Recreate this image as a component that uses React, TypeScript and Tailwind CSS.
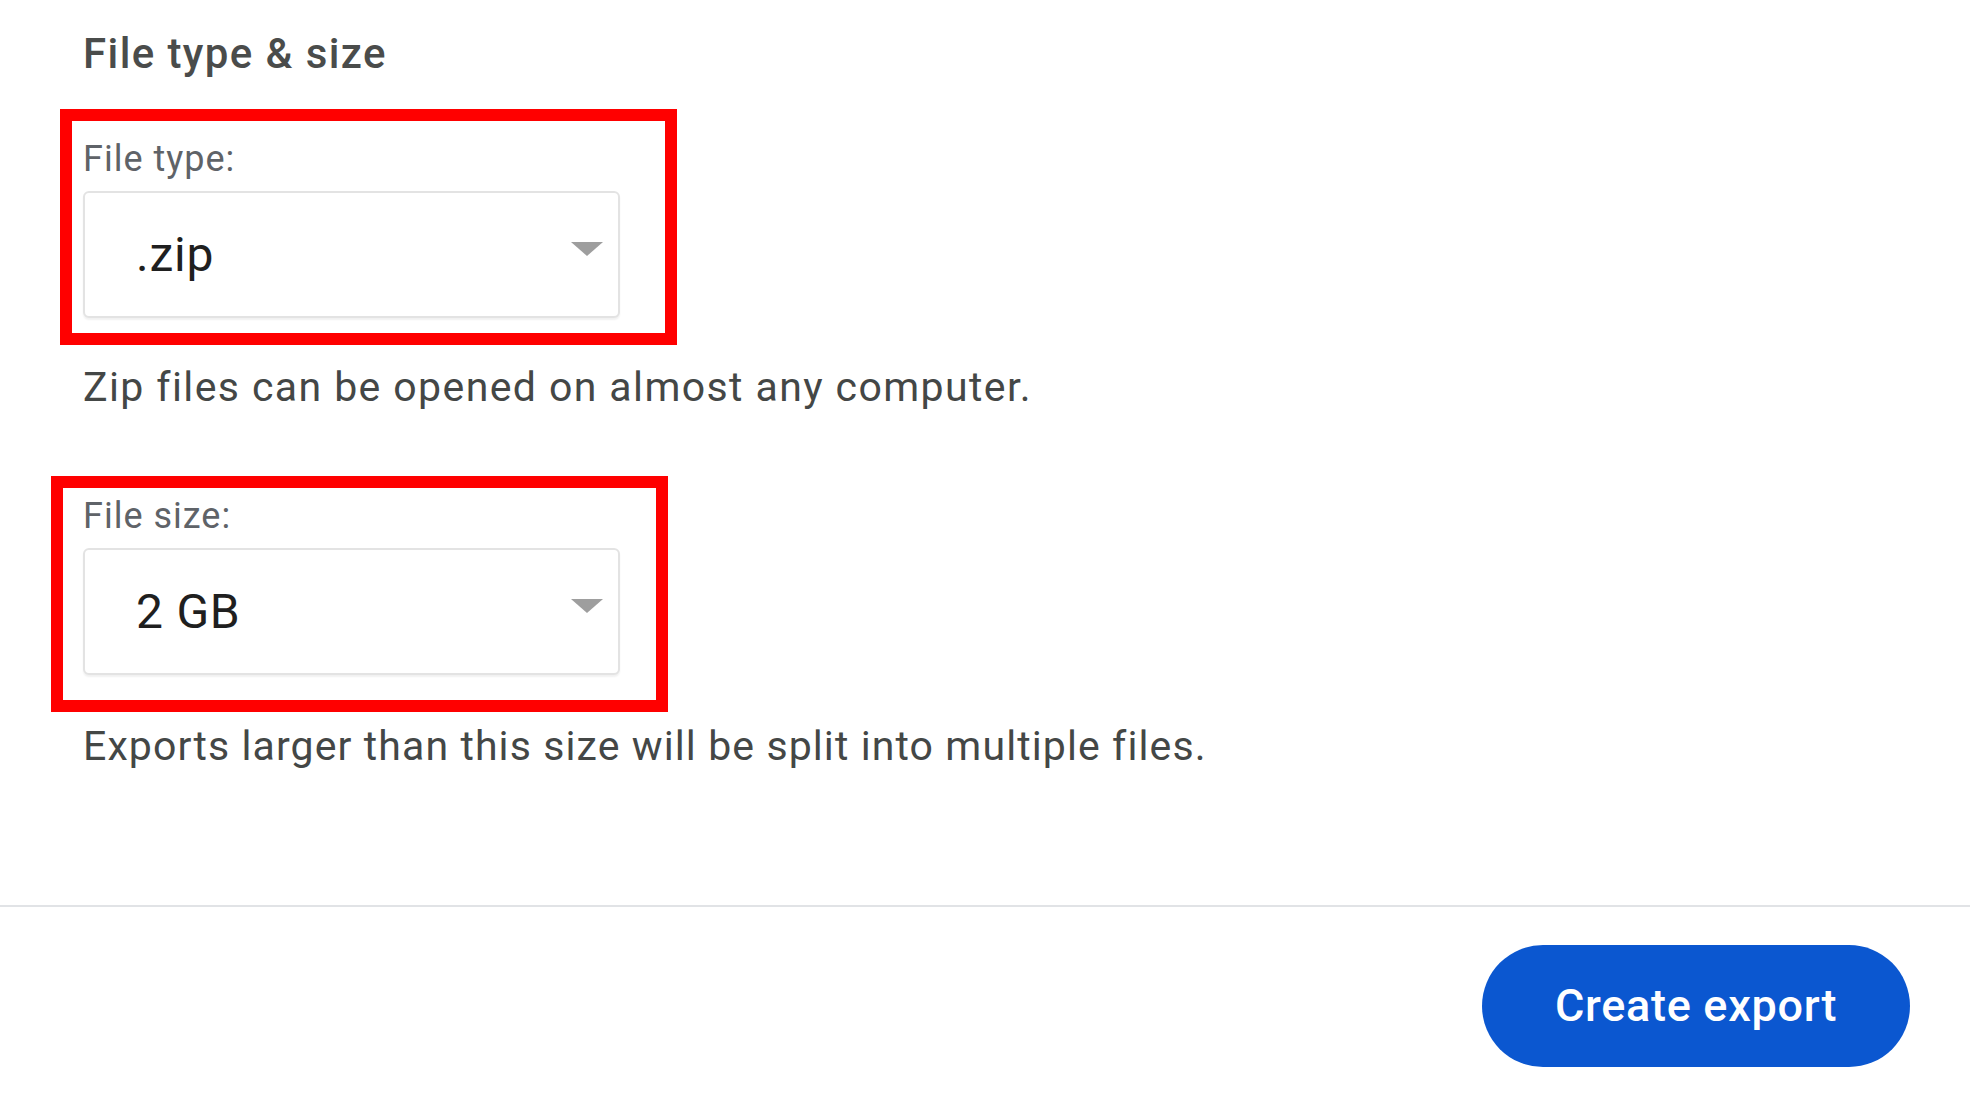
import React from 'react';

interface SelectFieldProps {
  label: string;
  value: string;
  boxClass: string;
}

const SelectField: React.FC<SelectFieldProps> = ({ label, value, boxClass }) => (
  <div className="relative w-[537px]">
    {/* annotation frame drawn over the field */}
    <div className={`absolute border-[12px] border-[#ff0000] pointer-events-none ${boxClass}`} />
    <div className="h-[40px] leading-[40px] text-[36px] tracking-[1px] text-[#5f6368]">{label}</div>
    <div className="mt-[12px] h-[127px] rounded-[6px] border-2 border-[#e3e3e3] bg-white shadow-[0_2px_2px_rgba(0,0,0,0.06)] flex items-center justify-between pl-[51px] pr-[14px]">
      <span className="text-[48px] tracking-[0.75px] text-[#1f1f1f]">{value}</span>
      <svg width="34" height="16" viewBox="0 0 34 16" className="-mt-[12px]">
        <path d="M1 1 H33 L17 15 Z" fill="#9e9e9e" />
      </svg>
    </div>
  </div>
);

export default function App() {
  return (
    <div className="h-[1097px] w-full bg-white flex flex-col font-['Roboto','Liberation_Sans',sans-serif]">
      <div className="pl-[83px]">
        <h2 className="mt-[28px] h-[52px] leading-[52px] text-[42px] tracking-[1.4px] font-medium text-[#4a4c4b]">File type &amp; size</h2>

        <div className="mt-[59px]">
          <SelectField label="File type:" value=".zip" boxClass="-left-[23px] -top-[30px] w-[617px] h-[236px]" />
        </div>
        <p className="mt-[45px] h-[48px] leading-[48px] text-[41px] tracking-[1.4px] text-[#444746]">
          Zip files can be opened on almost any computer.
        </p>

        <div className="mt-[85px]">
          <SelectField label="File size:" value="2 GB" boxClass="-left-[32px] -top-[20px] w-[617px] h-[236px]" />
        </div>
        <p className="mt-[47px] h-[48px] leading-[48px] text-[41px] tracking-[1.1px] text-[#444746]">
          Exports larger than this size will be split into multiple files.
        </p>
      </div>

      <div className="mt-[135px] border-t-2 border-[#e1e3e6]" />

      <div className="flex justify-end pr-[60px] pt-[38px]">
        <button className="h-[122px] w-[428px] rounded-full bg-[#0b57d0] text-white text-[45px] tracking-[0.7px] font-medium">
          Create export
        </button>
      </div>
    </div>
  );
}
